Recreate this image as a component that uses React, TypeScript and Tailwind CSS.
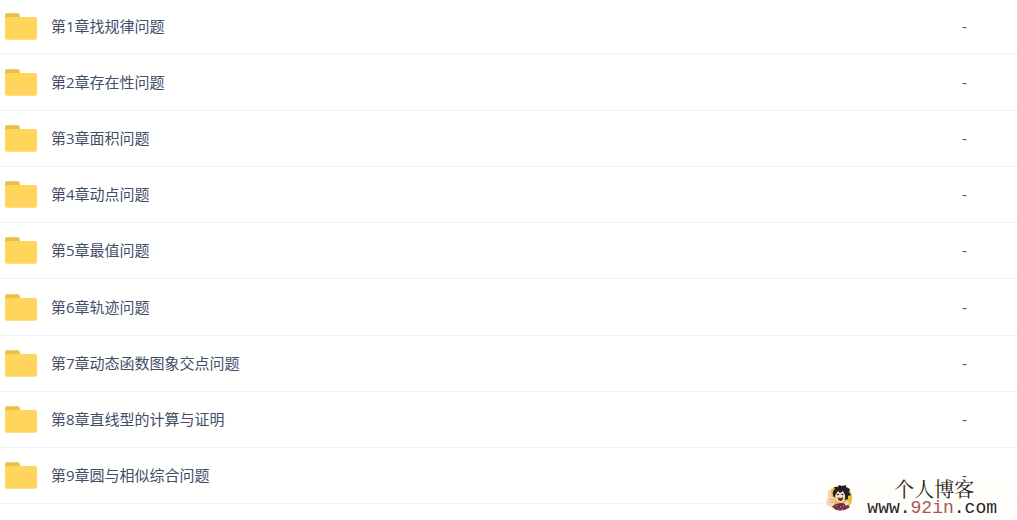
import React from 'react';

interface Folder {
  id: number;
  name: string;
  size: string;
}

const folders: Folder[] = [
  { id: 1, name: '第1章找规律问题', size: '-' },
  { id: 2, name: '第2章存在性问题', size: '-' },
  { id: 3, name: '第3章面积问题', size: '-' },
  { id: 4, name: '第4章动点问题', size: '-' },
  { id: 5, name: '第5章最值问题', size: '-' },
  { id: 6, name: '第6章轨迹问题', size: '-' },
  { id: 7, name: '第7章动态函数图象交点问题', size: '-' },
  { id: 8, name: '第8章直线型的计算与证明', size: '-' },
  { id: 9, name: '第9章圆与相似综合问题', size: '-' },
];

function FolderIcon() {
  return (
    <svg width="32" height="30" viewBox="0 -2 32 30" aria-hidden="true" className="shrink-0">
      <path d="M0 10V2Q0 .3 1.8 .3H12.6Q14 .3 14.5 1.7L15.4 5V10Z" fill="#e8c04c" />
      <path d="M0 4H30.2Q32 4 32 5.8V25Q32 26.8 30.2 26.8H1.8Q0 26.8 0 25Z" fill="#ffd55b" />
    </svg>
  );
}

function FolderRow({ folder }: { folder: Folder }) {
  return (
    <tr className="h-14 border-b border-[#f1f3fa] first:h-[53px] nth-[4n+2]:h-[57px]">
      <td className="p-0 pl-[5px] align-middle">
        <a href={`#chapter-${folder.id}`} className="flex items-center gap-[14px]">
          <FolderIcon />
          <span>{folder.name}</span>
        </a>
      </td>
      <td className="w-[55px] p-0 align-middle">{folder.size}</td>
    </tr>
  );
}

function Mascot() {
  return (
    <svg width="28" height="28" viewBox="0 0 28 28" aria-hidden="true" className="shrink-0">
      <circle cx="15" cy="14" r="12.2" fill="#e9bd45" />
      <path d="M7 22Q14 17 22 20L25 23Q20 27 14 26.5Q9 26 7 22Z" fill="#6d3048" />
      <path d="M8 11Q7 7 10 5L9 3L13 3L14 1L17 2L21 1L21 3L25 5L24 8L26 11L23 12L23 15Q16 18 9 13Z" fill="#24212b" />
      <path d="M11 10L13 7L15 9L18 7L20 11Q21 18 15.5 18.5Q10.5 18 10 12Z" fill="#f7d9be" />
      <path d="M12 10.8L14 10.2M16.4 10.2L18.4 10.8" stroke="#33262a" strokeWidth="1.2" />
      <path d="M12.6 13.5Q15.5 14.5 18.4 13.2Q18 17 15.5 17Q13 17 12.6 13.5Z" fill="#6b3035" />
      <path d="M3 11Q2 7 4 6Q6 6 6 9L7 13Q10 13 10 15L9 21Q6 24 2 21Q0 17 3 14Z" fill="#f6d5b5" />
      <path d="M5 15.5H9M5 18H9" stroke="#c99979" strokeWidth=".7" />
      <path d="M19 19L23 17L24 20L21 22Z" fill="#f6d5b5" />
      <path d="M11 22H12M15 23H16M18 22H19M13 25H14M17 25H18" stroke="#ee9eb4" strokeWidth="1" />
    </svg>
  );
}

function BlogBadge() {
  return (
    <div className="absolute right-1 bottom-[3px] flex h-[38px] items-center bg-[#fffefb] pr-4 pl-1">
      <Mascot />
      <div className="ml-[14px] flex flex-col items-center text-[#252321]">
        <span className="pl-1 font-['Liberation_Serif','Noto_Serif_CJK_SC','Noto_Sans_CJK_SC',serif] text-xl leading-5">
          个人博客
        </span>
        <a href="#blog" className="font-['Liberation_Mono',monospace] text-lg leading-4">
          www.<span className="text-[#a35a56]">92in</span>.com
        </a>
      </div>
    </div>
  );
}

export default function App() {
  return (
    <main className="relative bg-white pb-4 font-['Open_Sans','Noto_Sans_CJK_SC',sans-serif] text-[15px] leading-5 text-[#424e67]">
      <table className="w-full border-collapse">
        <tbody>
          {folders.map((folder) => (
            <FolderRow key={folder.id} folder={folder} />
          ))}
        </tbody>
      </table>
      <BlogBadge />
    </main>
  );
}
